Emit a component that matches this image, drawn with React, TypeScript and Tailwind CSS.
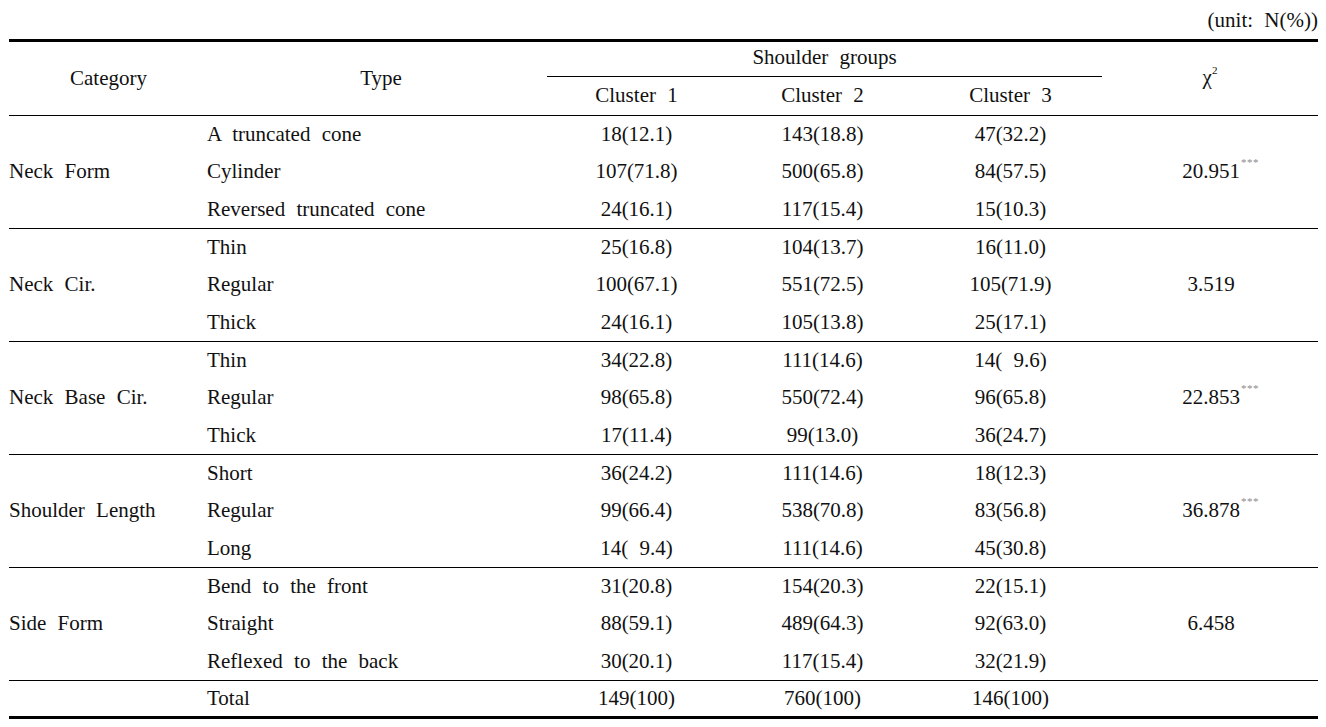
import React from 'react';

type Row = { type: string; c1: string; c2: string; c3: string };
type Group = { category: string; chi: string; sig?: boolean; rows: Row[] };

const groups: Group[] = [
  {
    category: 'Neck Form',
    chi: '20.951',
    sig: true,
    rows: [
      { type: 'A truncated cone', c1: '18(12.1)', c2: '143(18.8)', c3: '47(32.2)' },
      { type: 'Cylinder', c1: '107(71.8)', c2: '500(65.8)', c3: '84(57.5)' },
      { type: 'Reversed truncated cone', c1: '24(16.1)', c2: '117(15.4)', c3: '15(10.3)' },
    ],
  },
  {
    category: 'Neck Cir.',
    chi: '3.519',
    rows: [
      { type: 'Thin', c1: '25(16.8)', c2: '104(13.7)', c3: '16(11.0)' },
      { type: 'Regular', c1: '100(67.1)', c2: '551(72.5)', c3: '105(71.9)' },
      { type: 'Thick', c1: '24(16.1)', c2: '105(13.8)', c3: '25(17.1)' },
    ],
  },
  {
    category: 'Neck Base Cir.',
    chi: '22.853',
    sig: true,
    rows: [
      { type: 'Thin', c1: '34(22.8)', c2: '111(14.6)', c3: '14(\u00a09.6)' },
      { type: 'Regular', c1: '98(65.8)', c2: '550(72.4)', c3: '96(65.8)' },
      { type: 'Thick', c1: '17(11.4)', c2: '99(13.0)', c3: '36(24.7)' },
    ],
  },
  {
    category: 'Shoulder Length',
    chi: '36.878',
    sig: true,
    rows: [
      { type: 'Short', c1: '36(24.2)', c2: '111(14.6)', c3: '18(12.3)' },
      { type: 'Regular', c1: '99(66.4)', c2: '538(70.8)', c3: '83(56.8)' },
      { type: 'Long', c1: '14(\u00a09.4)', c2: '111(14.6)', c3: '45(30.8)' },
    ],
  },
  {
    category: 'Side Form',
    chi: '6.458',
    rows: [
      { type: 'Bend to the front', c1: '31(20.8)', c2: '154(20.3)', c3: '22(15.1)' },
      { type: 'Straight', c1: '88(59.1)', c2: '489(64.3)', c3: '92(63.0)' },
      { type: 'Reflexed to the back', c1: '30(20.1)', c2: '117(15.4)', c3: '32(21.9)' },
    ],
  },
];

const cols = 'grid grid-cols-[198px_340px_185px_185px_185px_216px]';

function Chi({ value, sig }: { value: string; sig?: boolean }) {
  return (
    <span className="relative">
      {value}
      {sig && (
        <span className="absolute left-full top-[-4px] pl-[1px] text-[11px] tracking-[0.5px] text-[#8c8c8c]">***</span>
      )}
    </span>
  );
}

export default function App() {
  return (
    <div className="min-h-[727px] bg-white text-[21px] leading-none text-[#111] [font-family:'Liberation_Serif',serif] [word-spacing:6px]">
      <div className="flex h-[39px] items-center justify-end pr-[8px] pt-[1px]">(unit: N(%))</div>

      <div className="ml-[9px] w-[1309px] border-t-[3px] border-b-[3px] border-black">
        {/* header */}
        <div className="flex h-[74px] border-b border-black">
          <div className="flex w-[198px] items-center justify-center pl-[1px]">Category</div>
          <div className="flex w-[340px] items-center justify-center pl-[8px]">Type</div>
          <div className="flex w-[555px] flex-col">
            <div className="flex h-[35px] items-center justify-center border-b border-black pb-[4px]">
              Shoulder groups
            </div>
            <div className="grid flex-1 grid-cols-3 items-center pb-[2px] text-center">
              <span className="pr-[6px]">Cluster 1</span>
              <span className="pr-[4px]">Cluster 2</span>
              <span className="pl-[2px]">Cluster 3</span>
            </div>
          </div>
          <div className="flex w-[216px] items-center justify-center pb-[2px]">
            <span>
              χ<sup className="relative top-[-2px] text-[11px] align-super">2</sup>
            </span>
          </div>
        </div>

        {/* groups */}
        {groups.map((g) => (
          <div key={g.category} className={`${cols} h-[113px] grid-rows-3 border-b border-black`}>
            <div className="row-span-3 flex items-center">{g.category}</div>
            {g.rows.map((r, i) => (
              <React.Fragment key={r.type}>
                <div className="col-start-2 flex items-center" style={{ gridRowStart: i + 1 }}>
                  {r.type}
                </div>
                <div className="col-start-3 flex items-center justify-center pr-[6px]" style={{ gridRowStart: i + 1 }}>
                  {r.c1}
                </div>
                <div className="col-start-4 flex items-center justify-center pr-[4px]" style={{ gridRowStart: i + 1 }}>
                  {r.c2}
                </div>
                <div className="col-start-5 flex items-center justify-center pl-[2px]" style={{ gridRowStart: i + 1 }}>
                  {r.c3}
                </div>
              </React.Fragment>
            ))}
            <div className="col-start-6 row-span-3 row-start-1 flex items-center justify-center pl-[2px]">
              <Chi value={g.chi} sig={g.sig} />
            </div>
          </div>
        ))}

        {/* total */}
        <div className={`${cols} h-[35px] items-center`}>
          <div />
          <div>Total</div>
          <div className="pr-[6px] text-center">149(100)</div>
          <div className="pr-[4px] text-center">760(100)</div>
          <div className="pl-[2px] text-center">146(100)</div>
          <div />
        </div>
      </div>
    </div>
  );
}
